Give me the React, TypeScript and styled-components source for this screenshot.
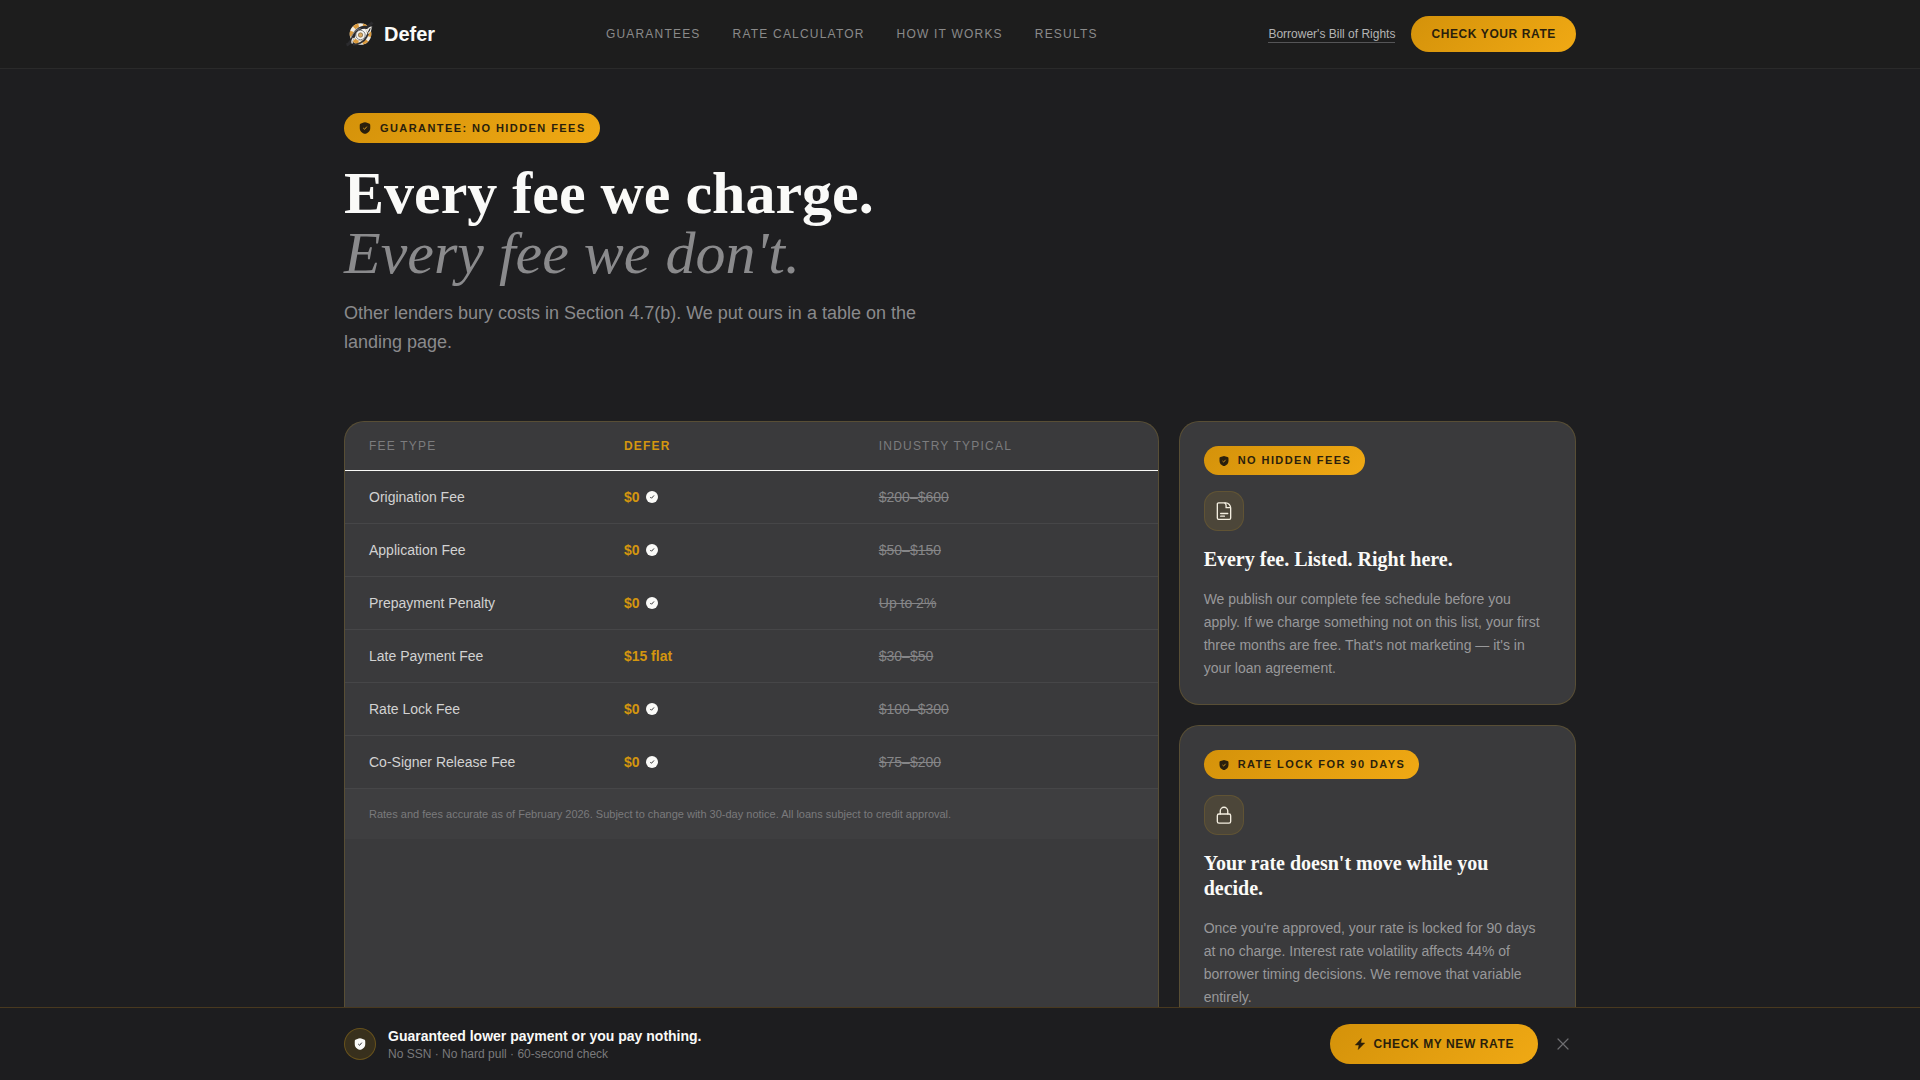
import React from "react";
import styled, { createGlobalStyle } from "styled-components";

const sans = '"Liberation Sans", Arial, sans-serif';
const serif = '"Liberation Serif", "Times New Roman", serif';
const ink = "#1c1c1e";
const gold = "#d4960f";
const goldFill = "linear-gradient(135deg, #d4920a 0%, #f0a914 100%)";
const goldLine = "rgba(212, 160, 23, 0.2)";

const GlobalStyle = createGlobalStyle`
  *, *::before, *::after { box-sizing: border-box; }
  body {
    margin: 0;
    background: #1e1e20;
    color: #fafaf8;
    font-family: ${sans};
    font-size: 14px;
  }
  h1, h2, p { margin: 0; }
  a { color: inherit; text-decoration: none; }
  button { font-family: inherit; cursor: pointer; }
`;

const Container = styled.div`
  width: 100%;
  max-width: 1280px;
  margin: 0 auto;
  padding: 0 24px;
`;

const Header = styled.header`
  position: sticky;
  top: 0;
  z-index: 10;
  background: #1d1d1d;
  border-bottom: 1px solid #2a2a2a;
`;

const HeaderRow = styled(Container)`
  display: flex;
  align-items: center;
  justify-content: space-between;
  padding-top: 16px;
  padding-bottom: 16px;
`;

const Brand = styled.a`
  display: flex;
  align-items: center;
  gap: 8px;
  font-size: 20px;
  line-height: 32px;
  font-weight: 700;
`;

const Nav = styled.nav`
  display: flex;
  gap: 32px;
  font-size: 12px;
  line-height: 20px;
  letter-spacing: 0.1em;
  text-transform: uppercase;
  color: #8a8a8a;
`;

const HeaderActions = styled.div`
  display: flex;
  align-items: center;
  gap: 16px;
`;

const RightsLink = styled.a`
  font-size: 12px;
  line-height: 16px;
  color: #b4b4b4;
  border-bottom: 1px solid #555557;
`;

const GoldButton = styled.button<{ $large?: boolean }>`
  display: inline-flex;
  align-items: center;
  gap: 8px;
  height: ${(p) => (p.$large ? 40 : 36)}px;
  padding: 0 ${(p) => (p.$large ? 24 : 20)}px;
  border: 0;
  border-radius: 20px;
  background: ${goldFill};
  color: #2a1f0c;
  font-size: 12px;
  font-weight: 700;
  letter-spacing: 0.05em;
  text-transform: uppercase;
`;

const Hero = styled.section`
  display: flex;
  flex-direction: column;
  align-items: flex-start;
  padding: 44px 0 64px;
`;

const Pill = styled.span<{ $small?: boolean }>`
  display: inline-flex;
  align-items: center;
  align-self: flex-start;
  gap: 8px;
  padding: 6px 14px;
  border-radius: 16px;
  background: ${goldFill};
  color: #2a1f0c;
  font-size: 11px;
  line-height: ${(p) => (p.$small ? 17 : 18)}px;
  font-weight: 700;
  letter-spacing: 0.13em;
  text-transform: uppercase;
`;

const Headline = styled.h1`
  margin-top: 20px;
  font-family: ${serif};
  font-size: 60px;
  line-height: 60px;
  font-weight: 700;

  em {
    display: block;
    font-weight: 400;
    color: #8a8a8c;
  }
`;

const Lead = styled.p`
  max-width: 576px;
  margin-top: 16px;
  font-size: 18px;
  line-height: 29px;
  color: #8a8a8c;
`;

const Board = styled.section`
  display: grid;
  grid-template-columns: repeat(12, minmax(0, 1fr));
  gap: 20px;
  padding-bottom: 40px;
`;

const Card = styled.article`
  display: flex;
  flex-direction: column;
  align-items: flex-start;
  gap: 16px;
  padding: 24px;
  border: 1px solid ${goldLine};
  border-radius: 20px;
  background: #3a3a3c;
`;

const FeeCard = styled.div`
  grid-column: span 8;
  overflow: hidden;
  border: 1px solid ${goldLine};
  border-radius: 20px;
  background: #3a3a3c;
`;

const SideColumn = styled.div`
  grid-column: span 4;
  display: flex;
  flex-direction: column;
  gap: 20px;
`;

const FeeTable = styled.table`
  display: block;
  text-align: left;

  thead, tbody { display: block; }
  th, td { padding: 0; font-weight: 400; }
  tbody th { color: #d2d2d2; }
  thead th.ours { font-weight: 700; color: ${gold}; }
`;

const FeeRow = styled.tr<{ $head?: boolean }>`
  display: grid;
  grid-template-columns: repeat(3, minmax(0, 1fr));
  align-items: center;
  height: ${(p) => (p.$head ? 49 : 53)}px;
  padding: 0 24px;
  border-bottom: 1px solid ${(p) => (p.$head ? "#fafaf8" : "#464648")};
  ${(p) =>
    p.$head &&
    `
    font-size: 12px;
    letter-spacing: 0.1em;
    text-transform: uppercase;
    color: #7c7c7e;
  `}
`;

const OurFee = styled.span`
  display: flex;
  align-items: center;
  gap: 7px;
  font-weight: 700;
  color: ${gold};
`;

const TheirFee = styled.s`
  color: #868688;
`;

const Footnote = styled.p`
  padding: 16px 24px;
  background: #3e3e40;
  font-size: 11px;
  line-height: 18px;
  color: #7a7a7c;
`;

const IconTile = styled.span`
  display: grid;
  place-items: center;
  width: 40px;
  height: 40px;
  border: 1px solid rgba(212, 160, 23, 0.15);
  border-radius: 14px;
  background: rgba(190, 150, 40, 0.14);
  color: #f3eee0;
`;

const CardTitle = styled.h2`
  font-family: ${serif};
  font-size: 20px;
  line-height: 25px;
  font-weight: 700;
`;

const CardText = styled.p`
  line-height: 23px;
  color: #98989a;
`;

const OfferBar = styled.aside`
  position: fixed;
  left: 0;
  right: 0;
  bottom: 0;
  z-index: 10;
  background: #1d1d1f;
  border-top: 1px solid #49391f;
`;

const OfferRow = styled(Container)`
  display: flex;
  align-items: center;
  gap: 12px;
  padding-top: 16px;
  padding-bottom: 16px;
`;

const OfferSeal = styled.span`
  display: grid;
  place-items: center;
  width: 32px;
  height: 32px;
  border: 1px solid rgba(212, 160, 23, 0.3);
  border-radius: 50%;
  background: rgba(212, 160, 23, 0.15);
`;

const OfferText = styled.div`
  flex: 1;
`;

const OfferTitle = styled.p`
  line-height: 20px;
  font-weight: 700;
`;

const OfferNote = styled.p`
  font-size: 12px;
  line-height: 16px;
  color: #7a7a7c;
`;

const CloseButton = styled.button`
  display: grid;
  place-items: center;
  padding: 6px;
  border: 0;
  background: none;
  color: #6e6e71;
`;

const ChipLogo = () => (
  <svg width="32" height="32" viewBox="0 0 32 32" fill="none" aria-hidden="true">
    <circle cx="16.500" cy="16" r="8.800" stroke="#f1ede4" strokeWidth="4" />
    <circle cx="16.500" cy="16" r="8.800" stroke="#d9993c" strokeWidth="4" strokeDasharray="5 4.200" strokeDashoffset="2.500" />
    <circle cx="16.500" cy="16" r="6.800" fill="#f7f6f2" />
    <path d="M2.500 27C7 25.500 8 20.500 11 15.500S18 8.500 23 9.500l5.500-5" stroke="#2b2b2e" strokeWidth="3" />
    <path d="M9 26.500c5 .5 11-2.500 13.500-7.500s2.500-7 6-11" stroke="#303033" strokeWidth="1.800" />
    <path d="M7 19.500c2-4 4.500-8 9.500-9" stroke="#8b8b8d" strokeWidth="0.900" />
    <path d="M8.500 25.500c-1-1.500-.5-3.500 1-5.500" stroke="#e9e6df" strokeWidth="1.400" />
    <path d="M23 13.500c.5-2.500 2-4 4-4.500.3 2.500-.8 5-3 6.500" stroke="#e9e6df" strokeWidth="1.100" />
    <circle cx="16.500" cy="17" r="4.700" fill="#f5f3ee" stroke="#77777a" strokeWidth="0.900" />
    <circle cx="16.500" cy="17" r="2.200" fill="#dba95f" stroke="#77603c" strokeWidth="0.700" />
  </svg>
);

const Shield = ({ size, tick }: { size: number; tick: string }) => (
  <svg width={size} height={size} viewBox="0 0 24 24" aria-hidden="true">
    <path
      d="M12 2c-.9 0-1.700.4-3.400 1L5.200 4.200C3.300 5 3 5.400 3 8v4c0 5.600 4 8.200 6.700 9.400.8.4 1.300.6 2.300.6s1.500-.2 2.300-.6C17 20.200 21 17.600 21 12V8c0-2.600-.3-3-2.200-3.800L15.400 3C13.700 2.400 12.900 2 12 2z"
      fill="currentColor"
    />
    <path d="M9.500 12.500l1.800 1.700 3.400-4" fill="none" stroke={tick} strokeWidth="1.600" strokeLinecap="round" strokeLinejoin="round" />
  </svg>
);

const CheckDisc = () => (
  <svg width="12" height="12" viewBox="0 0 24 24" role="img" aria-label="No charge">
    <circle cx="12" cy="12" r="12" fill="#fafaf8" />
    <path d="M9 12.500l2 2 4.500-5" fill="none" stroke="#3a3a3c" strokeWidth="2" strokeLinecap="round" strokeLinejoin="round" />
  </svg>
);

const FileIcon = () => (
  <svg width="20" height="20" viewBox="0 0 24 24" fill="none" stroke="currentColor" strokeWidth="1.600" strokeLinecap="round" strokeLinejoin="round" aria-hidden="true">
    <path d="M5.500 2.200H14c3.500 0 6 3 6 6.300V20.500a1.500 1.500 0 0 1-1.500 1.500h-13A1.500 1.500 0 0 1 4 20.500V3.700a1.500 1.500 0 0 1 1.500-1.500z" />
    <path d="M13 2.500c1 .8 1.500 1.500 1.500 3V8H19.500M8 15h8.500M8 18.200h4.500" />
  </svg>
);

const LockIcon = () => (
  <svg width="20" height="20" viewBox="0 0 24 24" fill="none" stroke="currentColor" strokeWidth="1.600" strokeLinecap="round" strokeLinejoin="round" aria-hidden="true">
    <rect x="4" y="10.800" width="16" height="11" rx="2" />
    <path d="M7.500 10.800V7.200a4.500 4.500 0 0 1 9 0v3.600" />
  </svg>
);

const BoltIcon = () => (
  <svg width="12" height="12" viewBox="1 1 22 22" aria-hidden="true">
    <path d="M14.500 2L3.500 13.800h6.700L8.800 22 20.500 10.200h-7L14.500 2z" fill="currentColor" stroke="currentColor" strokeWidth="1" strokeLinejoin="round" />
  </svg>
);

const CloseIcon = () => (
  <svg width="14" height="14" viewBox="0 0 14 14" aria-hidden="true">
    <path d="M2 2l10 10M12 2L2 12" stroke="currentColor" strokeWidth="1.200" strokeLinecap="round" />
  </svg>
);

const links = ["Guarantees", "Rate Calculator", "How It Works", "Results"];

const fees = [
  { name: "Origination Fee", ours: "$0", typical: "$200–$600" },
  { name: "Application Fee", ours: "$0", typical: "$50–$150" },
  { name: "Prepayment Penalty", ours: "$0", typical: "Up to 2%" },
  { name: "Late Payment Fee", ours: "$15 flat", typical: "$30–$50" },
  { name: "Rate Lock Fee", ours: "$0", typical: "$100–$300" },
  { name: "Co-Signer Release Fee", ours: "$0", typical: "$75–$200" },
];

const promises = [
  {
    tag: "No Hidden Fees",
    icon: <FileIcon />,
    title: "Every fee. Listed. Right here.",
    text: "We publish our complete fee schedule before you apply. If we charge something not on this list, your first three months are free. That's not marketing — it's in your loan agreement.",
  },
  {
    tag: "Rate Lock for 90 Days",
    icon: <LockIcon />,
    title: "Your rate doesn't move while you decide.",
    text: "Once you're approved, your rate is locked for 90 days at no charge. Interest rate volatility affects 44% of borrower timing decisions. We remove that variable entirely.",
  },
];

export default function App() {
  return (
    <>
      <GlobalStyle />
      <Header>
        <HeaderRow>
          <Brand href="#">
            <ChipLogo />
            Defer
          </Brand>
          <Nav aria-label="Main">
            {links.map((label) => (
              <a key={label} href="#">{label}</a>
            ))}
          </Nav>
          <HeaderActions>
            <RightsLink href="#">Borrower's Bill of Rights</RightsLink>
            <GoldButton type="button">Check Your Rate</GoldButton>
          </HeaderActions>
        </HeaderRow>
      </Header>

      <Container as="main">
        <Hero>
          <Pill>
            <Shield size={14} tick="#e0a020" />
            Guarantee: No Hidden Fees
          </Pill>
          <Headline>
            Every fee we charge.
            <em>Every fee we don't.</em>
          </Headline>
          <Lead>
            Other lenders bury costs in Section 4.7(b). We put ours in a table on the landing page.
          </Lead>
        </Hero>

        <Board>
          <FeeCard>
            <FeeTable>
              <thead>
                <FeeRow $head>
                  <th scope="col">Fee Type</th>
                  <th scope="col" className="ours">Defer</th>
                  <th scope="col">Industry Typical</th>
                </FeeRow>
              </thead>
              <tbody>
                {fees.map((fee) => (
                  <FeeRow key={fee.name}>
                    <th scope="row">{fee.name}</th>
                    <td>
                      <OurFee>
                        {fee.ours}
                        {fee.ours === "$0" && <CheckDisc />}
                      </OurFee>
                    </td>
                    <td><TheirFee>{fee.typical}</TheirFee></td>
                  </FeeRow>
                ))}
              </tbody>
            </FeeTable>
            <Footnote>
              Rates and fees accurate as of February 2026. Subject to change with 30-day notice. All loans subject to credit approval.
            </Footnote>
          </FeeCard>

          <SideColumn>
            {promises.map((item) => (
              <Card key={item.tag}>
                <Pill $small>
                  <Shield size={12} tick="#e0a020" />
                  {item.tag}
                </Pill>
                <IconTile>{item.icon}</IconTile>
                <CardTitle>{item.title}</CardTitle>
                <CardText>{item.text}</CardText>
              </Card>
            ))}
          </SideColumn>
        </Board>
      </Container>

      <OfferBar>
        <OfferRow>
          <OfferSeal><Shield size={14} tick={ink} /></OfferSeal>
          <OfferText>
            <OfferTitle>Guaranteed lower payment or you pay nothing.</OfferTitle>
            <OfferNote>No SSN · No hard pull · 60-second check</OfferNote>
          </OfferText>
          <GoldButton type="button" $large>
            <BoltIcon />
            Check My New Rate
          </GoldButton>
          <CloseButton type="button" aria-label="Dismiss offer"><CloseIcon /></CloseButton>
        </OfferRow>
      </OfferBar>
    </>
  );
}
